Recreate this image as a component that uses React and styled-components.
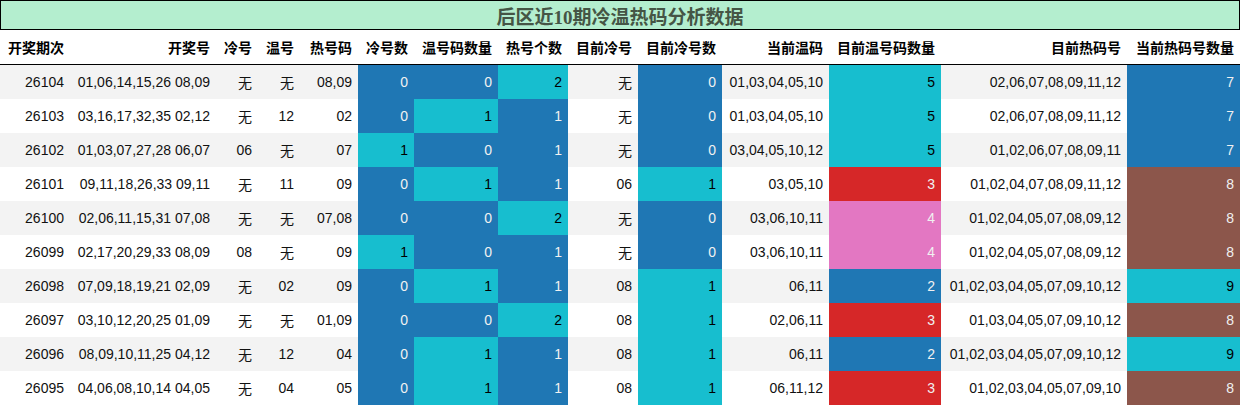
import styled, { createGlobalStyle } from "styled-components";

const GlobalStyle = createGlobalStyle`
  body {
    margin: 0;
    background: #fff;
    font-family: "Liberation Sans", "Noto Sans CJK SC", sans-serif;
  }
`;

const Wrap = styled.div`
  width: 1240px;
`;

const Title = styled.div`
  height: 28px;
  border: 1px solid #000;
  background: #b4eecf;
  display: flex;
  align-items: center;
  justify-content: center;
  padding-top: 1px;
  box-sizing: border-box;
  height: 30px;
  font-family: "Liberation Serif", "Noto Sans CJK SC", serif;
  font-weight: bold;
  font-size: 19px;
  color: #455545;
`;

const Table = styled.table`
  width: 1240px;
  table-layout: fixed;
  border-collapse: collapse;
  font-size: 14px;
`;

const Th = styled.th`
  height: 34px;
  padding: 0 6px 0 0;
  text-align: right;
  font-weight: bold;
  font-size: 14px;
  color: #000;
  white-space: nowrap;
  border-bottom: 1px solid #000;
`;

const Row = styled.tr`
  background: ${(p) => (p.$striped ? "#f3f3f3" : "#fff")};
`;

const palette = {
  blue: ["#1f77b4", "#f1f1f1"],
  cyan: ["#17becf", "#000"],
  red: ["#d62728", "#f1f1f1"],
  pink: ["#e377c2", "#f1f1f1"],
  brown: ["#8c564b", "#f1f1f1"],
};

const Td = styled.td`
  height: 34px;
  padding: 0 6px 0 0;
  text-align: right;
  white-space: nowrap;
  color: ${(p) => (p.$tone ? palette[p.$tone][1] : "#111")};
  background: ${(p) => (p.$tone ? palette[p.$tone][0] : "transparent")};
`;

const widths = [70, 146, 42, 42, 58, 56, 84, 70, 70, 84, 107, 112, 186, 113];

const headers = [
  "开奖期次", "开奖号", "冷号", "温号", "热号码", "冷号数", "温号码数量",
  "热号个数", "目前冷号", "目前冷号数", "当前温码", "目前温号码数量",
  "目前热码号", "当前热码号数量",
];

const tone = {
  5: { 0: "blue", 1: "cyan" },
  6: { 0: "blue", 1: "cyan" },
  7: { 1: "blue", 2: "cyan" },
  9: { 0: "blue", 1: "cyan" },
  11: { 2: "blue", 3: "red", 4: "pink", 5: "cyan" },
  13: { 7: "blue", 8: "brown", 9: "cyan" },
};

const rows = [
  ["26104", "01,06,14,15,26 08,09", "无", "无", "08,09", 0, 0, 2, "无", 0, "01,03,04,05,10", 5, "02,06,07,08,09,11,12", 7],
  ["26103", "03,16,17,32,35 02,12", "无", "12", "02", 0, 1, 1, "无", 0, "01,03,04,05,10", 5, "02,06,07,08,09,11,12", 7],
  ["26102", "01,03,07,27,28 06,07", "06", "无", "07", 1, 0, 1, "无", 0, "03,04,05,10,12", 5, "01,02,06,07,08,09,11", 7],
  ["26101", "09,11,18,26,33 09,11", "无", "11", "09", 0, 1, 1, "06", 1, "03,05,10", 3, "01,02,04,07,08,09,11,12", 8],
  ["26100", "02,06,11,15,31 07,08", "无", "无", "07,08", 0, 0, 2, "无", 0, "03,06,10,11", 4, "01,02,04,05,07,08,09,12", 8],
  ["26099", "02,17,20,29,33 08,09", "08", "无", "09", 1, 0, 1, "无", 0, "03,06,10,11", 4, "01,02,04,05,07,08,09,12", 8],
  ["26098", "07,09,18,19,21 02,09", "无", "02", "09", 0, 1, 1, "08", 1, "06,11", 2, "01,02,03,04,05,07,09,10,12", 9],
  ["26097", "03,10,12,20,25 01,09", "无", "无", "01,09", 0, 0, 2, "08", 1, "02,06,11", 3, "01,03,04,05,07,09,10,12", 8],
  ["26096", "08,09,10,11,25 04,12", "无", "12", "04", 0, 1, 1, "08", 1, "06,11", 2, "01,02,03,04,05,07,09,10,12", 9],
  ["26095", "04,06,08,10,14 04,05", "无", "04", "05", 0, 1, 1, "08", 1, "06,11,12", 3, "01,02,03,04,05,07,09,10", 8],
];

export default function App() {
  return (
    <Wrap>
      <GlobalStyle />
      <Title>后区近10期冷温热码分析数据</Title>
      <Table>
        <colgroup>
          {widths.map((w, i) => (
            <col key={i} style={{ width: w }} />
          ))}
        </colgroup>
        <thead>
          <tr>
            {headers.map((h) => (
              <Th key={h}>{h}</Th>
            ))}
          </tr>
        </thead>
        <tbody>
          {rows.map((r, ri) => (
            <Row key={r[0]} $striped={ri % 2 === 0}>
              {r.map((v, ci) => (
                <Td key={ci} $tone={tone[ci] ? tone[ci][v] : undefined}>
                  {v}
                </Td>
              ))}
            </Row>
          ))}
        </tbody>
      </Table>
    </Wrap>
  );
}
